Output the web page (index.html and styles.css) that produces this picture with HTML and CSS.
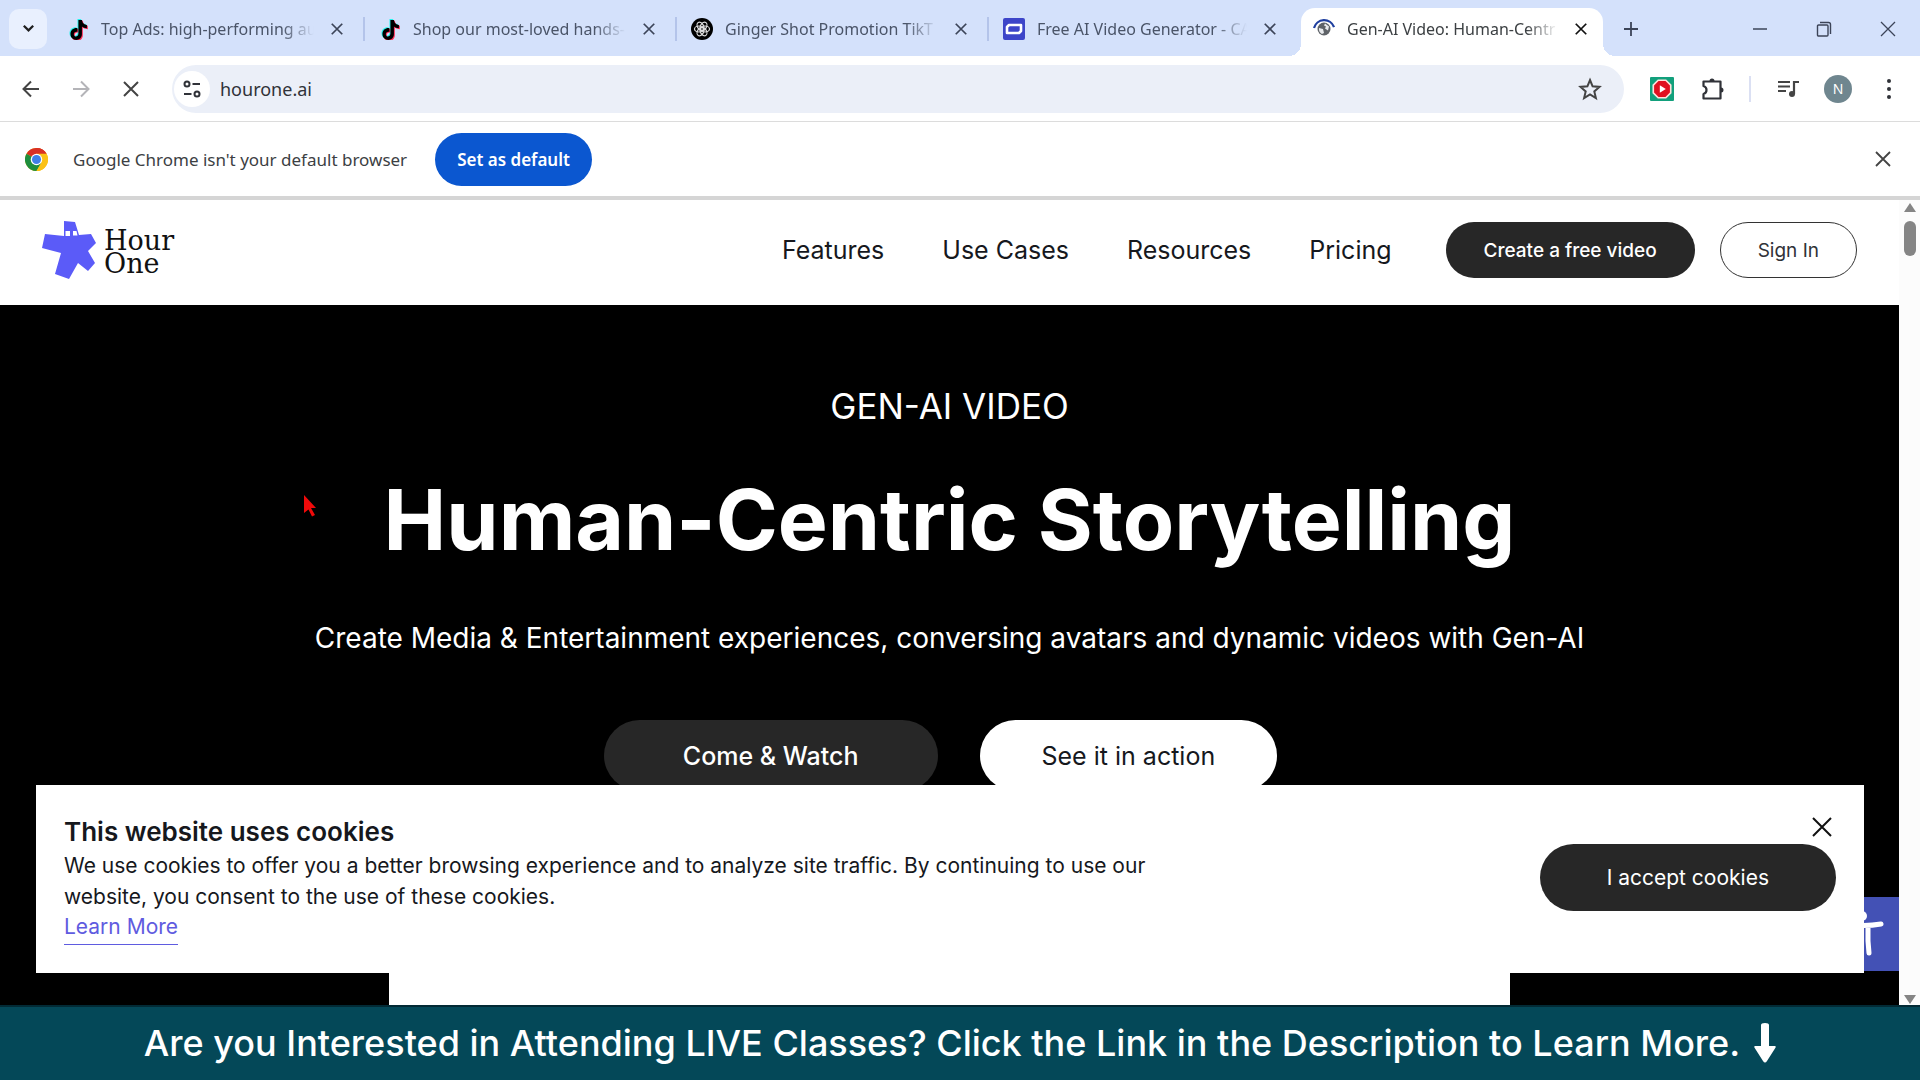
FILE: index.html
```html
<!DOCTYPE html>
<html lang="en">
<head>
<meta charset="utf-8">
<title>Gen-AI Video: Human-Centric Storytelling</title>
<link rel="stylesheet" href="styles.css">
</head>
<body>
<svg class="defs" aria-hidden="true">
  <symbol id="x" viewBox="0 0 16 16"><path d="M2 2l12 12M14 2L2 14" fill="none" stroke="currentColor" stroke-width="2"/></symbol>
  <symbol id="note" viewBox="0 0 20 22"><path d="M9.500 1h3.500c.3 3 2 4.700 5 5v3.300c-2 0-3.700-.6-5-1.600v7.500c0 8-11.500 7.500-11.500 0 0-4.300 3.500-6.500 7-6v3.700c-2-.6-3.600.6-3.600 2.400 0 3.300 4.600 3 4.600-.6z"/></symbol>
</svg>

<div class="tabs">
  <button class="tab-search" aria-label="Search tabs"><svg viewBox="0 0 16 16"><path d="M3 5l5 5 5-5" fill="none" stroke="#1f1f1f" stroke-width="2.400"/></svg></button>
  <div class="tab">
    <svg class="favicon" viewBox="-1 -1 22 24"><use href="#note" fill="#25f4ee" x="-1" y="-1"/><use href="#note" fill="#fe2c55" x="1" y="1"/><use href="#note"/></svg>
    <span class="tab-title">Top Ads: high-performing au</span>
    <button class="close" aria-label="Close tab"><svg><use href="#x"/></svg></button>
  </div>
  <div class="tab">
    <svg class="favicon" viewBox="-1 -1 22 24"><use href="#note" fill="#25f4ee" x="-1" y="-1"/><use href="#note" fill="#fe2c55" x="1" y="1"/><use href="#note"/></svg>
    <span class="tab-title">Shop our most-loved hands-</span>
    <button class="close" aria-label="Close tab"><svg><use href="#x"/></svg></button>
  </div>
  <div class="tab">
    <svg class="favicon" viewBox="0 0 22 22"><circle cx="11" cy="11" r="11"/><g fill="none" stroke="#ddd" stroke-width="1.200"><ellipse cx="11" cy="8" rx="3" ry="4.500" transform="rotate(30 11 11)"/><ellipse cx="11" cy="8" rx="3" ry="4.500" transform="rotate(90 11 11)"/><ellipse cx="11" cy="8" rx="3" ry="4.500" transform="rotate(150 11 11)"/><ellipse cx="11" cy="8" rx="3" ry="4.500" transform="rotate(210 11 11)"/><ellipse cx="11" cy="8" rx="3" ry="4.500" transform="rotate(270 11 11)"/><ellipse cx="11" cy="8" rx="3" ry="4.500" transform="rotate(330 11 11)"/></g></svg>
    <span class="tab-title">Ginger Shot Promotion TikT</span>
    <button class="close" aria-label="Close tab"><svg><use href="#x"/></svg></button>
  </div>
  <div class="tab last">
    <svg class="favicon" viewBox="0 0 22 22"><rect width="22" height="22" rx="2" fill="#3d45c9"/><path d="M6 7h12v6l-2 2H4V9z" fill="none" stroke="#fff" stroke-width="2.600" stroke-linejoin="round"/></svg>
    <span class="tab-title">Free AI Video Generator - CA</span>
    <button class="close" aria-label="Close tab"><svg><use href="#x"/></svg></button>
  </div>
  <div class="tab active">
    <svg class="favicon" viewBox="0 0 22 22"><path d="M1 10a10.500 10.500 0 0 1 20-1" fill="none" stroke="#1f3f9f" stroke-width="2.200"/><circle cx="11" cy="11" r="6.500" fill="#5f6368"/><path d="M6 10l4 1 1 4-2 1c-2-1-3.500-3-3-6zM12 5.500l4 3-1 4-3-2 1-2-2-1z" fill="#e8eaed"/></svg>
    <span class="tab-title">Gen-AI Video: Human-Centr</span>
    <button class="close" aria-label="Close tab"><svg><use href="#x"/></svg></button>
  </div>
  <button class="icon new-tab" aria-label="New tab"><svg viewBox="0 0 16 16"><path d="M8 1v14M1 8h14" stroke="currentColor" stroke-width="1.800"/></svg></button>
  <div class="window-controls">
    <button class="icon" aria-label="Minimize"><svg viewBox="0 0 16 16"><path d="M1 8h14" stroke="currentColor" stroke-width="1.500"/></svg></button>
    <button class="icon" aria-label="Restore"><svg viewBox="0 0 16 16" fill="none" stroke="currentColor" stroke-width="1.400"><rect x="1.500" y="4" width="10.500" height="11" rx="1"/><path d="M4 1.500h8.500a2 2 0 0 1 2 2V13"/></svg></button>
    <button class="icon" aria-label="Close"><svg viewBox="0 0 16 16"><path d="M1 1l14 14M15 1L1 15" stroke="currentColor" stroke-width="1.300"/></svg></button>
  </div>
</div>

<div class="toolbar">
  <button class="icon nav" aria-label="Back"><svg viewBox="0 0 18 18"><path d="M17 9H2M9 1.500L1.500 9 9 16.500" fill="none" stroke="#444" stroke-width="2"/></svg></button>
  <button class="icon nav" aria-label="Forward"><svg viewBox="0 0 18 18"><path d="M1 9h15M9 1.500L16.500 9 9 16.500" fill="none" stroke="#b4b4b8" stroke-width="2"/></svg></button>
  <button class="icon nav" aria-label="Stop"><svg viewBox="0 0 18 18"><path d="M2 2l14 14M16 2L2 16" stroke="#444" stroke-width="2"/></svg></button>
  <div class="omnibox">
    <button class="site" aria-label="Site information"><svg viewBox="0 0 20 20" fill="none" stroke="#303238" stroke-width="2"><circle cx="5" cy="5" r="2.500"/><path d="M10.500 5H18M2 15h7.500"/><circle cx="15" cy="15" r="2.500"/></svg></button>
    <input class="url" type="text" value="hourone.ai" aria-label="Address">
    <button class="icon star" aria-label="Bookmark"><svg viewBox="0 0 24 24"><path d="M12 3l2.600 6.300 6.900.6-5.200 4.500 1.600 6.700L12 17.500l-5.900 3.600 1.600-6.700L2.500 9.900l6.900-.6z" fill="none" stroke="#444" stroke-width="2"/></svg></button>
  </div>
  <button class="icon ext" aria-label="Ad blocker"><svg viewBox="0 0 22 22"><rect width="22" height="22" rx="1" fill="#12a07c"/><path d="M7.500 3h7l4.500 4.500v7L14.500 19h-7L3 14.500v-7z" fill="#e01020" stroke="#ffe1dc" stroke-width="1.500"/><path d="M9 7.500l5.500 3.500L9 14.500z" fill="#fff"/></svg></button>
  <button class="icon ext" aria-label="Extensions"><svg viewBox="0 0 24 24"><path d="M2.500 4.500h17v17h-17V17q3-1 3-4t-3-4z" fill="none" stroke="#303238" stroke-width="2.200" stroke-linejoin="round"/><path d="M8.500 4a2.500 2.500 0 0 1 5 0zM20 10.500a2.500 2.500 0 0 1 0 5z" fill="#303238"/></svg></button>
  <span class="divider"></span>
  <button class="icon ext" aria-label="Media controls"><svg viewBox="0 0 24 24"><path d="M2 5h12M2 9.500h12M2 14h8" stroke="#444" stroke-width="2"/><path d="M18 17V5h5" fill="none" stroke="#444" stroke-width="2.200"/><circle cx="16" cy="17" r="3" fill="#444"/></svg></button>
  <button class="avatar" aria-label="Profile">N</button>
  <button class="icon ext" aria-label="Menu"><svg viewBox="0 0 24 24"><g fill="#303238"><circle cx="12" cy="4" r="2"/><circle cx="12" cy="12" r="2"/><circle cx="12" cy="20" r="2"/></g></svg></button>
</div>

<div class="infobar">
  <svg class="chrome" viewBox="0 0 24 24"><circle cx="12" cy="12" r="12" fill="#fbc116"/><path d="M12 12L1.600 6A12 12 0 0 1 22.400 6z" fill="#d93025"/><path d="M12 6h10.400A12 12 0 0 0 12 0z" fill="#d93025"/><path d="M1.600 6A12 12 0 0 0 12 24l5.200-9L12 12z" fill="#1e8e3e"/><path d="M12 6h10.400A12 12 0 0 1 12 24l5.200-9z" fill="#fbc116"/><circle cx="12" cy="12" r="6" fill="#fff"/><circle cx="12" cy="12" r="4.700" fill="#3f7fe8"/></svg>
  <span>Google Chrome isn't your default browser</span>
  <button class="default">Set as default</button>
  <button class="icon dismiss" aria-label="Dismiss"><svg viewBox="0 0 16 16"><path d="M1 1l14 14M15 1L1 15" stroke="#444" stroke-width="1.800"/></svg></button>
</div>

<div class="viewport">
  <div class="page">
    <header class="header">
      <a class="logo" href="#"><svg viewBox="0 0 54 60"><path d="M22 1L33 2L37 15L49 14L54 23L46 31L53 43L46 51L36 43L27 59L13 54L19 33L0 28L3 14L22 16Z" fill="#5b5bf8"/><path d="M23.500 11h4.500v5h-4.500zM31 11h3.500l1 4.500h-4.500z" fill="#fff"/></svg><span>Hour<br>One</span></a>
      <nav class="menu">
        <a href="#">Features</a><a href="#">Use Cases</a><a href="#">Resources</a><a href="#">Pricing</a>
      </nav>
      <button class="pill small dark">Create a free video</button>
      <button class="pill small outline">Sign In</button>
    </header>
    <main class="hero">
      <p class="eyebrow">GEN-AI VIDEO</p>
      <h1>Human-Centric Storytelling</h1>
      <p class="lead">Create Media &amp; Entertainment experiences, conversing avatars and dynamic videos with Gen-AI</p>
      <div class="actions">
        <button class="pill large dark">Come &amp; Watch</button>
        <button class="pill large light">See it in action</button>
      </div>
      <div class="panel"></div>
      <svg class="pointer" viewBox="0 0 14 22"><path d="M1 0l12 13H8l4 7-3 1.500-3.500-7L1 18z" fill="#f00a0a"/></svg>
    </main>
    <button class="a11y" aria-label="Accessibility"><svg viewBox="0 0 74 74"><g fill="none" stroke="#fff" stroke-width="5" stroke-linecap="round"><path d="M18 26c12 3 26 3 38 1M31 30v14l-4 12M43 30v14l1 12"/></g><circle cx="37" cy="19" r="5" fill="#fff"/></svg></button>
    <section class="cookies">
      <div class="cookie-text">
        <h2>This website uses cookies</h2>
        <p>We use cookies to offer you a better browsing experience and to analyze site traffic. By continuing to use our website, you consent to the use of these cookies.</p>
        <a href="#">Learn More</a>
      </div>
      <div class="cookie-actions">
        <button class="icon cookie-close" aria-label="Close"><svg viewBox="0 0 20 20"><path d="M1 1l18 18M19 1L1 19" stroke="#111" stroke-width="2"/></svg></button>
        <button class="pill medium dark">I accept cookies</button>
      </div>
    </section>
  </div>
  <div class="scrollbar"><i class="up"></i><i class="thumb"></i><i class="down"></i></div>
</div>

<footer class="banner">
  <span>Are you Interested in Attending LIVE Classes? Click the Link in the Description to Learn More.</span>
  <svg viewBox="0 0 22 40"><path d="M7 2q0-2 4-2t4 2v21h6q1 0 .6 1.500L13 38q-2 3-4 0L.4 24.500Q0 23 1 23h6z" fill="#fff"/></svg>
</footer>
</body>
</html>
```
FILE: styles.css
```css
* { box-sizing: border-box; }
body {
  margin: 0;
  height: 100vh;
  display: flex;
  flex-direction: column;
  overflow: hidden;
  background: #fff;
  font-family: "Noto Sans", "Open Sans", sans-serif;
  color: #3c4043;
}
button {
  margin: 0;
  padding: 0;
  border: 0;
  background: none;
  color: inherit;
  font: inherit;
  flex: none;
}
h1, h2, p { margin: 0; }
a { text-decoration: none; color: inherit; }
svg { display: block; flex: none; }
.defs { position: absolute; width: 0; height: 0; }

/* Tab strip */
.tabs {
  display: flex;
  align-items: center;
  height: 56px;
  flex: none;
  padding: 1px 0 0 9px;
  background: #d4e1fb;
}
.tab-search {
  width: 38px;
  height: 40px;
  border-radius: 10px;
  background: #e9f0fe;
  display: grid;
  place-items: center;
  margin-right: 6px;
}
.tab-search svg { width: 15px; height: 15px; }
.tab {
  flex: 0 1 312px;
  min-width: 0;
  display: flex;
  align-items: center;
  gap: 12px;
  padding: 0 15px 0 14px;
  border-right: 2px solid #b4c4ea;
  height: 24px;
  font-size: 16px;
  line-height: 24px;
  color: #4a5468;
}
.tab.last { border-color: transparent; padding-right: 18px; }
.tab.active {
  flex-basis: 302px;
  height: 48px;
  align-self: flex-end;
  background: #fff;
  border: 0;
  border-radius: 14px 14px 0 0;
  padding: 0 11px 6px 12px;
  color: #3c4043;
  position: relative;
}
.tab.active::before, .tab.active::after {
  content: "";
  position: absolute;
  bottom: 0;
  width: 12px;
  height: 12px;
}
.tab.active::before { right: 100%; background: radial-gradient(circle at 0 0, transparent 12px, #fff 12px); }
.tab.active::after { left: 100%; background: radial-gradient(circle at 100% 0, transparent 12px, #fff 12px); }
.favicon { width: 22px; height: 22px; }
.tab-title {
  flex: 1;
  min-width: 0;
  overflow: hidden;
  white-space: nowrap;
  mask-image: linear-gradient(to right, #000 85%, transparent);
}
.close { padding: 4px; color: #3c4458; }
.close svg { width: 14px; height: 14px; }
.active .close { color: #111; }
.icon { display: grid; place-items: center; width: 64px; color: #3c4458; }
.icon svg { width: 16px; height: 16px; }
.new-tab { width: 56px; }
.window-controls { display: flex; margin-left: auto; }

/* Toolbar */
.toolbar {
  display: flex;
  align-items: center;
  height: 66px;
  flex: none;
  padding: 0 6px;
  border-bottom: 1px solid #dcdcdc;
}
.nav { width: 50px; }
.nav svg { width: 18px; height: 18px; }
.omnibox {
  flex: 1;
  display: flex;
  align-items: center;
  height: 48px;
  margin: 0 12px 0 16px;
  padding: 0 18px 0 2px;
  border-radius: 24px;
  background: #ebeff8;
}
.site {
  width: 36px;
  height: 36px;
  border-radius: 50%;
  background: #fff;
  display: grid;
  place-items: center;
}
.site svg { width: 20px; height: 20px; }
.url {
  flex: 1;
  min-width: 0;
  border: 0;
  outline: 0;
  background: none;
  padding: 0 10px;
  font: inherit;
  font-size: 18px;
  color: #303238;
}
.star { width: 32px; }
.star svg { width: 24px; height: 24px; }
.ext { width: 51px; }
.ext svg { width: 24px; height: 24px; }
.divider { width: 2px; height: 26px; margin: 0 11px; background: #dbe0f3; }
.avatar {
  width: 28px;
  height: 28px;
  margin: 0 11px;
  border-radius: 50%;
  background: #6f868f;
  color: #fff;
  font-size: 14px;
  line-height: 28px;
}

/* Default browser prompt */
.infobar {
  display: flex;
  align-items: center;
  height: 74px;
  flex: none;
  padding: 0 5px 0 25px;
  font-size: 17px;
}
.chrome { width: 23px; height: 23px; margin-right: 25px; }
.default {
  height: 53px;
  padding: 0 22px;
  margin-left: 28px;
  border-radius: 27px;
  background: #0b57d0;
  color: #fff;
  font-weight: 600;
}
.dismiss { margin-left: auto; }

/* Website */
.viewport {
  flex: 1;
  min-height: 0;
  display: flex;
  border-top: 4px solid #d5d5d5;
  font-family: Inter, "Liberation Sans", sans-serif;
}
.page {
  flex: 1;
  min-width: 0;
  display: flex;
  flex-direction: column;
  position: relative;
  overflow: hidden;
}
.header {
  display: flex;
  align-items: center;
  height: 105px;
  flex: none;
  padding: 0 42px 5px;
}
.logo {
  display: flex;
  align-items: center;
  gap: 8px;
  margin-right: auto;
  font-family: "DejaVu Serif", serif;
  font-size: 27px;
  line-height: 23px;
  color: #111;
}
.logo span { padding-top: 4px; }
.logo svg { width: 54px; height: 60px; }
.menu { display: flex; gap: 58px; margin-right: 54px; font-size: 25px; color: #16181d; }
.pill { border-radius: 40px; border: 1px solid transparent; }
.dark { background: #272727; color: #fff; font-weight: 500; }
.light { background: #fff; color: #16181d; }
.outline { border-color: #333; color: #303238; }
.small { height: 56px; padding: 0 37px; font-size: 19px; }
.small + .small { margin-left: 25px; }
.medium { height: 67px; padding: 0 66px; font-size: 21px; font-weight: 400; }
.large { height: 71px; font-size: 25px; }
.large.dark { padding: 0 78px; }
.large.light { padding: 0 61px; }
.hero {
  flex: 1;
  min-height: 0;
  position: relative;
  display: flex;
  flex-direction: column;
  align-items: center;
  padding-top: 79px;
  background: #000;
  color: #fff;
  overflow: hidden;
}
.eyebrow { font-size: 35px; line-height: 44px; }
h1 { font-size: 84px; line-height: 104px; font-weight: 700; margin-top: 40px; }
.lead { font-size: 28px; line-height: 36px; margin-top: 48px; white-space: nowrap; }
.actions { display: flex; gap: 42px; margin: 64px 18px 0 0; }
.panel { flex: none; width: 59%; height: 400px; margin-top: 100px; background: #fff; }
.pointer { position: absolute; left: 303px; top: 190px; width: 14px; height: 22px; }
.a11y {
  position: absolute;
  right: 0;
  bottom: 34px;
  width: 74px;
  height: 74px;
  background: #4351b5;
}
.cookies {
  position: absolute;
  left: 36px;
  right: 35px;
  bottom: 32px;
  display: flex;
  justify-content: space-between;
  padding: 28px;
  background: #fff;
  color: #16181d;
  font-size: 21px;
}
.cookie-text { max-width: 1100px; line-height: 31px; }
.cookie-text h2 { font-size: 26px; line-height: 37px; font-weight: 600; }
.cookie-text a { display: block; width: max-content; color: #5f5be0; border-bottom: 1px solid; line-height: 30px; padding-bottom: 2px; }
.cookie-actions { display: flex; flex-direction: column; align-items: flex-end; gap: 5px; }
.cookie-close { width: 28px; height: 24px; margin-top: 2px; }
.cookie-close svg { width: 20px; height: 20px; }

/* Scrollbar */
.scrollbar {
  width: 21px;
  flex: none;
  display: flex;
  flex-direction: column;
  align-items: center;
  gap: 9px;
  padding: 3px 0 1px;
  background: #fcfcfc;
}
.up, .down { border: 6px solid transparent; }
.up { border-top: 0; border-bottom: 9px solid #858585; }
.down { border-bottom: 0; border-top: 9px solid #858585; margin-top: auto; }
.thumb { width: 12px; height: 35px; border-radius: 6px; background: #858585; }

/* Bottom banner */
.banner {
  display: flex;
  align-items: center;
  justify-content: center;
  gap: 14px;
  height: 75px;
  flex: none;
  padding-bottom: 2px;
  border-top: 2px solid #022a35;
  background: #044858;
  color: #fff;
  font-family: Inter, sans-serif;
  font-size: 36px;
  font-weight: 500;
  white-space: nowrap;
}
.banner svg { width: 22px; height: 40px; }
```
